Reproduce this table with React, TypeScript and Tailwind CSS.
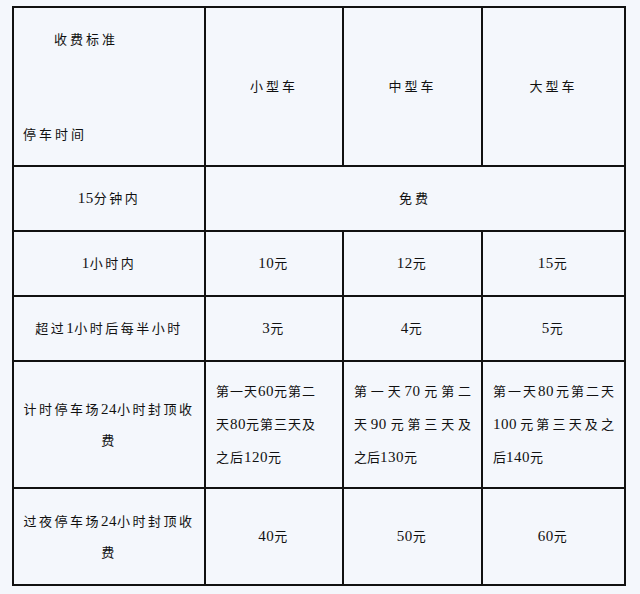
import React from "react";

const font = {
  fontFamily: '"Liberation Serif", "Noto Sans CJK SC", serif',
};

// digits in the source are a touch larger and set tight
function fmt(s: string) {
  return s.split(/(\d+)/).map((part, i) =>
    /^\d+$/.test(part) ? (
      <span key={i} className="text-[15px] tracking-[0.5px]">
        {part}
      </span>
    ) : (
      part
    )
  );
}

function Cell({
  children,
  className = "",
}: {
  children?: React.ReactNode;
  className?: string;
}) {
  return (
    <div
      className={
        "bg-[#f4f7fc] flex items-center justify-center text-[13px] tracking-[2.5px] text-[#111] " +
        className
      }
    >
      {typeof children === "string" ? fmt(children) : children}
    </div>
  );
}

// multi-line price cell: every line but the last is stretched to the width
function Lines({
  lines,
  justify,
  className = "",
}: {
  lines: string[];
  justify: boolean;
  className?: string;
}) {
  return (
    <div
      className={
        "w-full bg-[#f4f7fc] flex flex-col justify-center px-[10px] text-[13px] leading-[32px] text-[#111] " +
        className
      }
    >
      {lines.map((l, i) => (
        <div
          key={i}
          className={
            justify && i < lines.length - 1
              ? "text-justify [text-align-last:justify]"
              : "text-left"
          }
        >
          {fmt(l)}
        </div>
      ))}
    </div>
  );
}

export default function App() {
  return (
    <div className="w-[640px] h-[594px] bg-[#f4f7fc] pt-[6px] pl-[12px]" style={font}>
      <div className="w-[614px] grid grid-cols-[190px_136px_137px_141px] grid-rows-[157px_63px_63px_63px_125px_95px] gap-[2px] p-[2px] bg-[#111]">
        {/* header */}
        <div className="bg-[#f4f7fc] flex flex-col text-[13px] tracking-[3px] leading-[20px] text-[#111]">
          <div className="pt-[22px] pl-[40px]">收费标准</div>
          <div className="mt-[75px] pl-[9px]">停车时间</div>
        </div>
        <Cell className="tracking-[3px]">小型车</Cell>
        <Cell className="tracking-[3px]">中型车</Cell>
        <Cell className="tracking-[3px]">大型车</Cell>

        <Cell>15分钟内</Cell>
        <Cell className="col-span-3 tracking-[3px]">免费</Cell>

        <Cell>1小时内</Cell>
        <Cell>10元</Cell>
        <Cell>12元</Cell>
        <Cell>15元</Cell>

        <Cell>超过1小时后每半小时</Cell>
        <Cell>3元</Cell>
        <Cell>4元</Cell>
        <Cell>5元</Cell>

        <Cell className="text-center leading-[31px]">
          <div>
            {fmt("计时停车场24小时封顶收")}
            <br />费
          </div>
        </Cell>
        <Lines
          lines={["第一天60元第二", "天80元第三天及", "之后120元"]}
          justify={false}
          className="tracking-[1px]"
        />
        <Lines lines={["第一天70元第二", "天90元第三天及", "之后130元"]} justify={true} />
        <Lines lines={["第一天80元第二天", "100元第三天及之", "后140元"]} justify={true} />

        <Cell className="text-center leading-[31px]">
          <div>
            {fmt("过夜停车场24小时封顶收")}
            <br />费
          </div>
        </Cell>
        <Cell>40元</Cell>
        <Cell>50元</Cell>
        <Cell>60元</Cell>
      </div>
    </div>
  );
}
